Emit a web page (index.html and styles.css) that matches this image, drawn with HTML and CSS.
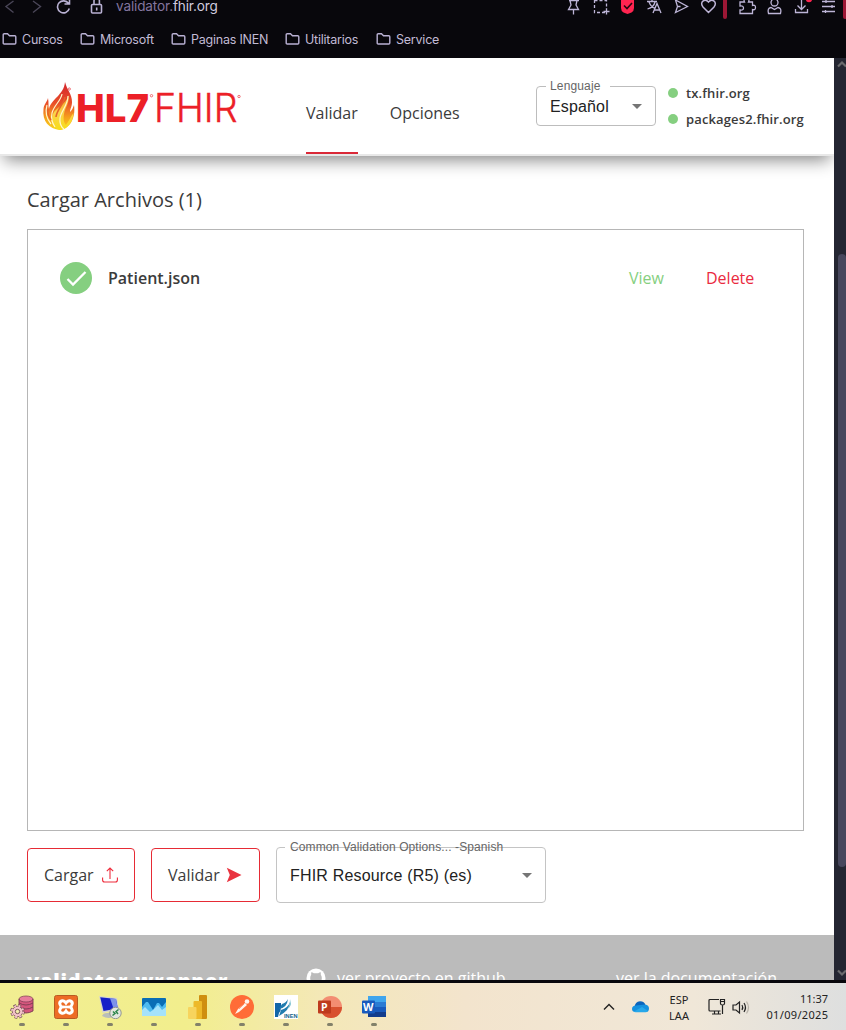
FILE: index.html
```html
<!DOCTYPE html>
<html lang="es">
<head>
<meta charset="utf-8">
<title>validator.fhir.org</title>
<link rel="stylesheet" href="styles.css">
</head>
<body>
<div class="screen">
  <header class="browser">
    <div class="toolbar">
      <svg class="nav-icons" width="104" height="20" viewBox="0 0 104 20" fill="none" stroke-width="1.4">
        <path d="M13.500 1L6 6.500l7.500 6M33 1l7.500 5.500-7.500 6" stroke="#4a4658"/>
        <g stroke="#b9b1d3" stroke-width="1.600"><path d="M68.500 3.500a6 6 0 1 0 .8 5M69.500-1v5h-5"/><rect x="91.500" y="4.500" width="10" height="8.500" rx="1"/><path d="M94 4V1a2.700 3 0 0 1 5.400 0v3M96.700 7.500v3"/></g>
      </svg>
      <span class="url"><span class="sub">validator.</span>fhir.org</span>
      <svg class="tool-icons" width="286" height="20" viewBox="560 0 286 20" fill="none" stroke="#bdb5d7" stroke-width="1.300">
        <path d="M569 .5h10M570 .5l1 4.500-2.500 4.500h10L576 5l1-4.500M573.500 9.500V14.500"/>
        <path d="M594.500 0v12.500H606M594.500.5h12V9" stroke-dasharray="3 2"/><path d="M606.500 8.500v6M603.500 11.500h6"/>
        <path d="M621-1h13v9q0 3-2.500 4.500L627.500 14l-4-1.500Q621 11 621 8z" fill="#ff2450" stroke="none"/><path d="M624 5.500l3 3 5-5.500" stroke="#25070f" stroke-width="1.600"/>
        <path d="M647 1.500h10M652-1v2.500M649 2q2 5 6 6.500M655 2q-1 5-7.500 7M653 13l4-9.500 4 9.500M654.500 10h5"/>
        <path d="M675.500 0L687.500 6.500l-12 6 2-6zM677.500 6.500h3"/>
        <path d="M708.500 12.500L703 7C699 2 705-2 708.500 2 712-2 718 2 714 7z" stroke-width="1.500"/>
        <rect x="723" y="-3" width="4" height="22" rx="2" fill="#9c1735" stroke="none"/>
        <path d="M740 2h4.500q-1.500-3 2-3t2 3h4v3.500q3-1 3 2t-3 2V13.500H740V10q3.500.5 3.500-2T740 6z"/>
        <circle cx="774.500" cy="2.500" r="3.500"/><path d="M768.500 13.500q-1.500-5.500 2.500-6l3.500 2 3.500-2q4 .5 2.500 6z"/>
        <path d="M801.500 0v9.500M797.500 5.500l4 4 4-4M795.500 9v3.500h12V9"/><circle cx="809" cy="-1" r="3.200" fill="#ff2450" stroke="none"/>
        <path d="M822 1.500h13M822 6.500h13M822 11.500h13M826 0v3M832 5v3M825.500 10v3"/>
        <rect x="843" y="-3" width="4" height="22" rx="2" fill="#9c1735" stroke="none"/>
      </svg>
    </div>
    <nav class="bookmarks">
      <span class="bm b1"><svg class="folder" viewBox="0 0 16 14"><path d="M1.200 11V2.700Q1.200 1.700 2.200 1.700h3.300l2 2h5.300q1 0 1 1V11q0 1-1 1H2.200q-1 0-1-1z"/></svg>Cursos</span>
      <span class="bm b2"><svg class="folder" viewBox="0 0 16 14"><path d="M1.200 11V2.700Q1.200 1.700 2.200 1.700h3.300l2 2h5.300q1 0 1 1V11q0 1-1 1H2.200q-1 0-1-1z"/></svg>Microsoft</span>
      <span class="bm b3"><svg class="folder" viewBox="0 0 16 14"><path d="M1.200 11V2.700Q1.200 1.700 2.200 1.700h3.300l2 2h5.300q1 0 1 1V11q0 1-1 1H2.200q-1 0-1-1z"/></svg>Paginas INEN</span>
      <span class="bm b4"><svg class="folder" viewBox="0 0 16 14"><path d="M1.200 11V2.700Q1.200 1.700 2.200 1.700h3.300l2 2h5.300q1 0 1 1V11q0 1-1 1H2.200q-1 0-1-1z"/></svg>Utilitarios</span>
      <span class="bm"><svg class="folder" viewBox="0 0 16 14"><path d="M1.200 11V2.700Q1.200 1.700 2.200 1.700h3.300l2 2h5.300q1 0 1 1V11q0 1-1 1H2.200q-1 0-1-1z"/></svg>Service</span>
    </nav>
  </header>

  <div class="viewport">
    <div class="page">
      <header class="site-header">
        <svg class="logo" width="204" height="56" viewBox="40 78 204 56">
          <defs>
            <linearGradient id="flame" x1="0" y1="0" x2="0" y2="1"><stop offset="0" stop-color="#d3222a"/><stop offset=".45" stop-color="#e9502a"/><stop offset=".75" stop-color="#f6a31c"/><stop offset="1" stop-color="#f8d51c"/></linearGradient>
            <linearGradient id="core" x1="0" y1="0" x2="0" y2="1"><stop offset="0" stop-color="#f39a25"/><stop offset=".5" stop-color="#fbd24a"/><stop offset="1" stop-color="#f7de18"/></linearGradient>
          </defs>
          <path d="M65 82C67 90 72 94 72 102C72 107 70 109 70 112C72 110 73 108 74 105C76 119 69 129 60 130C49 129 42 121 43.500 109C44 104 47 102 48 98C49 103 48 106 49 109C51 99 64 95 65 82z" fill="url(#flame)"/>
          <path d="M68.500 95C70 103 65 107 64 114C63 119 64 123 66 125C69 121 71 116 73.500 113C73 122 68 129 60 130C53 129 50 122 53 114C56 107 66 105 68.500 95z" fill="url(#core)"/>
          <path d="M62 94C61 101 54 105 52 113C51 118 52 123 55 127M68 96C68 105 61 111 60 118C59.500 123 61 127 64 129M47 105C45 112 46 118 51 124" fill="none" stroke="#fff6cb" stroke-width="1.200"/>
          <path d="M65 97C64 104 57 109 56 117M48 109C47 113 49 117 51 120" fill="none" stroke="#e5642a" stroke-width="1.500"/>
          <text class="hl7" x="76" y="122.300" textLength="73" lengthAdjust="spacingAndGlyphs">HL7</text>
          <text class="fhir" x="154" y="122.300" textLength="83.500" lengthAdjust="spacingAndGlyphs">FHIR</text>
          <g fill="none" stroke="#f06a70" stroke-width="1"><circle cx="69.300" cy="89" r="1.100"/><circle cx="151.500" cy="95.700" r="1.200"/><circle cx="239" cy="96.500" r="1.200"/></g>
        </svg>
        <nav class="tabs"><span class="tab active">Validar</span><span class="tab t2">Opciones</span></nav>
        <fieldset class="lang"><legend>Lenguaje</legend><span class="lang-value">Español</span><i class="caret"></i></fieldset>
        <ul class="servers"><li><i class="dot"></i><span class="s1">tx.fhir.org</span></li><li><i class="dot"></i><span class="s2">packages2.fhir.org</span></li></ul>
      </header>
      <main class="content">
        <h1>Cargar Archivos (1)</h1>
        <section class="files">
          <div class="file">
            <svg width="32" height="32" viewBox="0 0 32 32"><circle cx="16" cy="16" r="16" fill="#85cf80"/><path d="M7.500 17l5.500 5.500L25.500 10" fill="none" stroke="#fff" stroke-width="2.300"/></svg>
            <span class="name">Patient.json</span><span class="view">View</span><span class="delete">Delete</span>
          </div>
        </section>
        <div class="actions">
          <button class="btn upload"><span>Cargar</span><svg width="16" height="16" viewBox="0 0 16 16" fill="none" stroke="#ee2c3c" stroke-width="1.100"><path d="M.6 10.500V13q0 2 2 2h10.800q2 0 2-2v-2.500M8 12V1.200M4.800 4.200L8 1l3.200 3.200"/></svg></button>
          <button class="btn validate"><span>Validar</span><svg width="16" height="16" viewBox="0 0 16 16"><path d="M.8.800L15.500 8 .8 15.200 3.800 8z" fill="#e93440"/></svg></button>
          <div class="options"><span class="options-label">Common Validation Options... -Spanish</span><span class="options-value">FHIR Resource (R5) (es)</span><i class="caret"></i></div>
        </div>
      </main>
      <footer class="site-footer">
        <span class="brand">validator-wrapper</span>
        <svg class="github" width="20" height="20" viewBox="0 0 20 20"><circle cx="10" cy="10" r="9.500" fill="#fff"/><path d="M4.200 10q0-2 1-3.300V4.300q1.500 0 2.600 1h4.400q1.100-1 2.600-1v2.400q1 1.300 1 3.300 0 4.500-4 5H8.200q-4-.5-4-5z" fill="#bbb"/></svg>
        <span class="repo">ver proyecto en github</span>
        <span class="docs">ver la documentación</span>
      </footer>
    </div>
    <aside class="scroll">
      <svg width="12" height="12" viewBox="0 0 12 12"><path d="M4 8.500l4-4 4 4" fill="none" stroke="#696a6d" stroke-width="2.200"/></svg>
      <i class="thumb"></i>
      <svg width="12" height="12" viewBox="0 0 12 12"><path d="M4 3.500l4 4 4-4" fill="none" stroke="#696a6d" stroke-width="2.200"/></svg>
    </aside>
  </div>

  <footer class="taskbar">
    <div class="apps">
      <span class="app"><svg viewBox="0 0 24 24"><path d="M9 4v12q7 4 14 0V4z" fill="#d4567c"/><ellipse cx="16" cy="4" rx="7" ry="3" fill="#e87d9b" stroke="#793b50" stroke-width=".7"/><path d="M9 4v12q7 4 14 0V4M9 8q7 4 14 0M9 12q7 4 14 0" fill="none" stroke="#793b50" stroke-width=".9"/><circle cx="7.500" cy="16.500" r="6" fill="none" stroke="#704d55" stroke-width="2.600" stroke-dasharray="2.700 2.012"/><circle cx="7.500" cy="16.500" r="5.200" fill="#f4c3c9" stroke="#704d55" stroke-width=".8"/><circle cx="7.500" cy="16.500" r="5.700" fill="none" stroke="#f4c3c9" stroke-width="1.800" stroke-dasharray="2 2.477" stroke-dashoffset="-.3"/><circle cx="7.500" cy="16.500" r="2.200" fill="#f2edac" stroke="#704d55" stroke-width=".9"/></svg></span>
      <span class="app"><svg viewBox="0 0 24 24"><rect x=".5" y=".5" width="23" height="23" rx="2" fill="#ed6c25" stroke="#b85a22"/><path d="M7.500 6Q10 5 12 8q2-3 4.500-2t1.500 3.500Q17.500 11.500 16 12q1.500.5 2 2.500 1 2.500-1.500 3.500t-4.500-2q-2 3-4.500 2T6 14.500Q6.500 12.500 8 12 6.500 11.500 6 9.500 5 7 7.500 6z" fill="#ed6c25" stroke="#fff" stroke-width="3"/><path d="M9 12h6" stroke="#fff" stroke-width="2.600"/></svg></span>
      <span class="app"><svg viewBox="0 0 24 24"><path d="M4 21q1-3 5-3l7-1 1 4q-6 4-13 0z" fill="#b9beba"/><path d="M1 1l18 2 2 11.500L4.500 18z" fill="#d6d6ce"/><path d="M2.200 2.200L18 4l1.800 9.500L5.500 16z" fill="#1520c8"/><path d="M12 3.300l6 .7 1.800 9.500-4 .7z" fill="#7d92ea"/><circle cx="17.500" cy="18" r="5.700" fill="#e2e6df" stroke="#929792"/><path d="M14.500 20.500l2.500-2-2-2M20.500 14.500l-2.500 2 2 2.500" fill="none" stroke="#2c854a" stroke-width="1.500"/></svg></span>
      <span class="app"><svg viewBox="0 0 24 24"><rect y="3" width="24" height="18" rx="1" fill="#096db5"/><path d="M0 12l4-5h2l5 8 4-7h2l3 4 4-5v14H0z" fill="#4dbaf0"/><path d="M0 15l3-3 5 5 3-2 5-5 4 5 4-3v9H0z" fill="#a5e2fb"/></svg></span>
      <span class="app"><svg viewBox="0 0 24 24"><rect x="13" width="8" height="24" rx="1" fill="#cf8f10"/><rect x="7.500" y="6" width="8.500" height="18" rx="1" fill="#edb929"/><rect x="2" y="12" width="8.500" height="12" rx="1" fill="#f7d45d"/></svg></span>
      <span class="app"><svg viewBox="0 0 24 24"><circle cx="12" cy="12" r="12" fill="#ff6c37"/><circle cx="17" cy="6.500" r="2.300" fill="#fff4eb"/><path d="M15 8l2 2-8 7-4 2 3-5z" fill="#fff4eb"/><path d="M9 14l5-5" stroke="#ff6c37" stroke-width=".6"/></svg></span>
      <span class="app"><svg viewBox="0 0 24 24"><path fill="#fff" d="M0 0h24v24H0z"/><path d="M1 8h6v4q0 4-2 6l-1 4H1z" fill="#1266a9"/><path d="M14 4q-1 9-9 10l3-5q4-1 6-5zM16 7q0 8-11 14l2-6q7-2 9-8z" fill="#227daf"/><path d="M16 4q0 7-3 10 3-1 4-5z" fill="#83c4d2"/><text x="10" y="23" class="inen" textLength="13.500" lengthAdjust="spacingAndGlyphs">INEN</text></svg></span>
      <span class="app"><svg viewBox="0 0 24 24"><circle cx="13" cy="12" r="11" fill="#f38d72"/><path d="M2 12h22a11 11 0 0 1-22 0z" fill="#d8512f"/><rect y="5.500" width="13" height="13" rx="1" fill="#be3a1d"/><text class="letter" x="3" y="15.500">P</text></svg></span>
      <span class="app"><svg viewBox="0 0 24 24"><path d="M6 1h18v6H6z" fill="#40a5ed"/><path d="M6 7h18v5H6z" fill="#2c7bd3"/><path d="M6 12h18v5H6z" fill="#185abd"/><path d="M6 17h18v5H6z" fill="#123c8c"/><rect y="5.500" width="13" height="13" rx="1" fill="#185abd"/><text class="letter" x=".9" y="15.500" textLength="10.500" lengthAdjust="spacingAndGlyphs">W</text></svg></span>
    </div>
    <div class="tray">
      <svg class="chev" width="12" height="8" viewBox="0 0 12 8"><path d="M1 6.500L6 1.500l5 5" fill="none" stroke="#222" stroke-width="1.400"/></svg>
      <svg class="cloud" width="17" height="12" viewBox="0 0 17 12"><path d="M2.500 6Q3 1 8 .3q4.500 0 5.500 4L10 8z" fill="#0a64bd"/><path d="M0 8q0-3.500 4-3.500l9-1Q17 4 17 7.500 17 11 13.500 11h-10Q0 11 0 8z" fill="#1491df"/><path d="M2 10.500l8-4.500 6 4q-1 1.300-2.500 1.300h-10Q2.500 11.300 2 10.500z" fill="#28a8ea"/></svg>
      <div class="ime"><span>ESP</span><span>LAA</span></div>
      <svg class="sys" width="42" height="18" viewBox="0 0 42 18" fill="none" stroke="#222" stroke-width="1.200"><path d="M11 1.500H2q-1 0-1 1V12q0 1 1 1h10.500M4 16h9M6.500 13v3M10.500 13v3M12.500 1.500h4v4q0 1.500-2 1.500t-2-1.500zM14.500 7v9M12.500 3.500h4"/><path d="M25 7h3l3.500-3v11L28 12h-3zM34 7q1.500 2.500 0 5M36 5q3 4.500 0 9"/><path d="M38.500 3.500q4 6 0 12" stroke="#b9b4aa"/></svg>
      <div class="clock"><span class="time">11:37</span><span class="date">01/09/2025</span></div>
    </div>
  </footer>
</div>
</body>
</html>
```
FILE: styles.css
```css
* { box-sizing: border-box; }
body { margin: 0; background: #08070c; font-family: "Open Sans", sans-serif; color: #3b3b3b; }
.screen { width: 846px; height: 1030px; overflow: hidden; display: flex; flex-direction: column; }

.browser { height: 58px; flex: none; background: #08070c; color: #c2bbd5; font-family: Inter, sans-serif; }
.toolbar { height: 28px; display: flex; align-items: flex-start; }
.url { margin-left: 12px; width: 444px; font-size: 13.600px; line-height: 13px; letter-spacing: -.15px; white-space: nowrap; color: #d0cadf; }
.url .sub { color: #83759f; }
.bookmarks { display: flex; height: 24px; padding-left: 2px; }
.bm { display: flex; align-items: center; gap: 4px; height: 24px; margin-top: -1px; font-size: 12.500px; letter-spacing: -.22px; white-space: nowrap; width: 78px; }
.b2 { width: 91px; }
.b3 { width: 114px; }
.b4 { width: 91px; }
.folder { width: 16px; height: 14px; fill: none; stroke: #b9b1d3; stroke-width: 1.400; }

.viewport { height: 922px; flex: none; display: flex; overflow: hidden; }
.page { width: 834px; height: 922px; overflow: hidden; background: #fff; }
.site-header { position: relative; height: 98px; display: flex; background: #fff; border-bottom: 2px solid #e8e8e8; box-shadow: 0 8px 16px -4px rgba(0,0,0,.48); }
.logo { margin: 20px 0 0 40px; flex: none; }
.hl7 { font: 800 38.800px Inter, sans-serif; fill: #ec2027; }
.fhir { font: 300 38.800px Inter, sans-serif; fill: #ec2027; stroke: #ec2027; stroke-width: .4; }
.tabs { display: flex; margin-left: 62px; width: 230px; }
.tab { height: 96px; padding-top: 44px; margin-right: 32px; font-size: 16px; line-height: 22px; }
.tab.active { border-bottom: 2px solid #da2837; }
.lang { margin: 20px 0 0; width: 120px; height: 48px; border: 1px solid #bdbdbd; border-radius: 4px; padding: 0 13px; display: flex; justify-content: space-between; font-family: "Liberation Sans", sans-serif; flex: none; }
.lang legend { margin-left: -4px; padding: 0 9px 0 4px; font-size: 12px; line-height: 16px; color: #666; letter-spacing: .15px; }
.lang-value { font-size: 16px; line-height: 26px; color: #222; letter-spacing: .15px; }
.caret { width: 0; height: 0; border: 5px solid transparent; border-top-color: #757575; border-bottom: 0; }
.lang .caret { margin-top: 10px; }
.servers { list-style: none; margin: 22px 0 0 12px; padding: 0; font-size: 13px; font-weight: 600; letter-spacing: .13px; }
.servers li { display: flex; align-items: center; height: 26px; gap: 8px; }
.dot { width: 10px; height: 10px; border-radius: 50%; background: #85cf80; }

.content { padding: 30px 30px 0 27px; height: 779px; }
h1 { margin: 0; font-size: 20px; line-height: 28px; font-weight: 400; }
.files { margin-top: 15px; height: 602px; border: 1px solid #b6b6b6; padding: 32px; }
.file { height: 32px; display: flex; align-items: center; font-size: 16px; }
.name { margin-left: 16px; font-weight: 600; width: 521px; }
.view { color: #85cf80; width: 77px; }
.delete { color: #ea2a3e; }
.actions { display: flex; margin-top: 16px; align-items: center; gap: 16px; }
.btn { display: flex; align-items: center; height: 54px; border: 1px solid #e62b35; border-radius: 4px; background: #fff; font: 16px "Open Sans", sans-serif; color: #3b3b3b; padding: 0 16px; justify-content: space-between; }
.upload { width: 108px; }
.validate { width: 109px; padding-right: 17px; }
.options { position: relative; width: 270px; height: 56px; border: 1px solid #c4c4c4; border-radius: 4px; display: flex; align-items: center; justify-content: space-between; padding: 0 13px; font-family: "Liberation Sans", sans-serif; color: #222; }
.options::before { content: ""; position: absolute; left: 8px; top: -1px; width: 6px; height: 1px; background: #fff; }
.options-label { position: absolute; left: 13px; top: -9px; font-size: 12px; line-height: 16px; letter-spacing: .11px; color: #666; white-space: nowrap; }
.options-value { font-size: 16px; letter-spacing: .18px; padding-top: 2px; }
.site-footer { height: 60px; background: #bbb; color: #fff; display: flex; padding: 32px 0 0 27px; font-size: 16px; line-height: 22px; }
.brand { font-size: 20px; line-height: 27px; font-weight: 800; width: 279px; letter-spacing: .77px; white-space: nowrap; }
.github { margin-top: 1px; flex: none; }
.repo { margin-left: 11px; width: 279px; }
.docs { white-space: nowrap; }

.scroll { width: 12px; background: #242632; display: flex; flex-direction: column; }
.thumb { margin: 184px 0 100px 4px; height: 613px; width: 8px; flex: none; border-radius: 4px; background: #47475d; }
.scroll svg { flex: none; }

.taskbar { height: 50px; flex: none; border-top: 3px solid #08070c; display: flex; justify-content: space-between; background: linear-gradient(90deg, #f1ee92 0, #f2ee8d 22%, #f4e8b7 38%, #f3e4cd 55%, #f0e7d8 82%, #dedfdf 100%); font-family: "Noto Sans", sans-serif; color: #222; }
.apps { display: flex; gap: 20px; padding: 12px 0 0 10px; }
.app { display: flex; flex-direction: column; align-items: center; width: 24px; }
.app svg { width: 24px; height: 24px; flex: none; }
.app::after { content: ""; width: 6px; height: 3px; margin-top: 4px; border-radius: 2px; background: #82816a; }
.letter { font: bold 10.500px "Open Sans", sans-serif; fill: #fff; }
.inen { font: bold 6px "Liberation Sans", sans-serif; fill: #13638b; }
.tray { display: flex; padding-right: 18px; font-size: 11px; line-height: 16px; }
.chev { margin: 20px 17px 0 0; }
.cloud { margin: 18px 19px 0 0; }
.ime { display: flex; flex-direction: column; align-items: center; width: 22px; margin: 9px 18px 0 0; letter-spacing: .1px; }
.sys { margin: 15px 15px 0 0; }
.clock { display: flex; flex-direction: column; align-items: flex-end; width: 63px; margin-top: 8px; white-space: nowrap; }
.date { letter-spacing: .33px; margin-right: -.33px; }
```
